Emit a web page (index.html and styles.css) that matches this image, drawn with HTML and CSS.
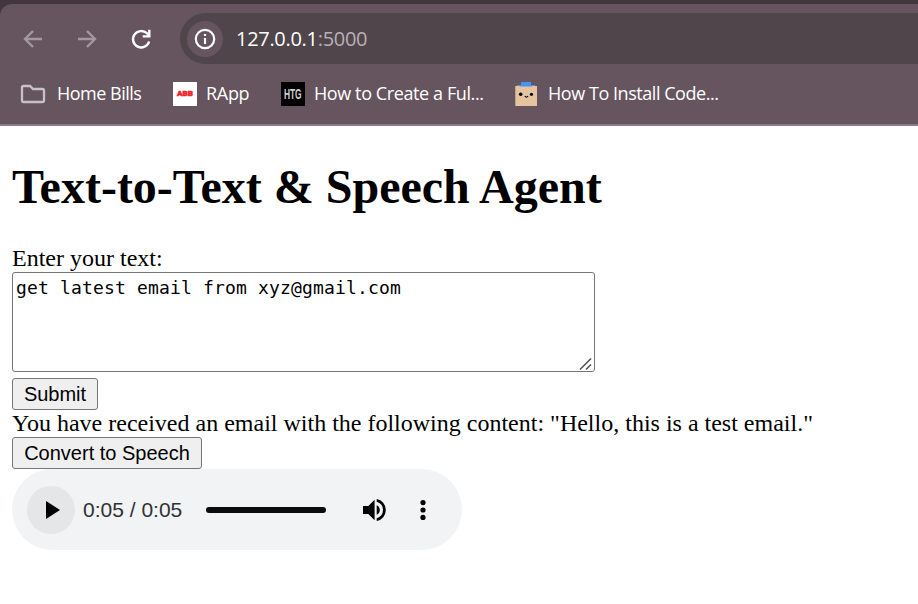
FILE: index.html
```html
<!DOCTYPE html>
<html lang="en">
<head>
<meta charset="utf-8">
<title>Text-to-Text &amp; Speech Agent</title>
<link rel="stylesheet" href="styles.css">
</head>
<body>
<header class="chrome">
  <div class="panel">
    <div class="toolbar">
      <svg class="nav dim" viewBox="0 0 24 24"><path d="M21 12H4M12 4l-8 8 8 8"/></svg>
      <svg class="nav dim" viewBox="0 0 24 24"><path d="M3 12h17M12 4l8 8-8 8"/></svg>
      <svg class="nav reload" viewBox="0 0 24 24"><path d="M20.100 14.500A8.200 8.200 0 1 1 17.800 6.200L20 8.400"/><path d="M20.300 2.800v6.600h-6.600"/></svg>
      <div class="address">
        <span class="info"><svg viewBox="0 0 22 22"><circle cx="11" cy="11" r="9.2"/><path d="M11 10v6M11 6v2.1"/></svg></span>
        <span class="url">127.0.0.1<span class="port">:5000</span></span>
      </div>
    </div>
    <nav class="bookmarks">
      <svg class="folder" viewBox="0 0 26 20"><path d="M2 3.5Q2 2 3.5 2H10l3 3h9.5Q24 5 24 6.500V16.500Q24 18 22.500 18H3.500Q2 18 2 16.500Z"/></svg>
      <span class="label home">Home Bills</span>
      <span class="icon abb">ABB</span>
      <span class="label rapp">RApp</span>
      <span class="icon htg"><span>HTG</span></span>
      <span class="label create">How to Create a Ful...</span>
      <svg class="bag" viewBox="0 0 24 24"><path fill="#4795ea" d="M6 0h10v3h4v2H2V3h4z"/><path fill="#e6c3a1" d="M.3 4H22v20H.3z"/><path fill="#4795ea" d="M3 3h16l-2 1.500H5z"/><circle cx="5.700" cy="12.300" r="1.800"/><circle cx="16.500" cy="12.300" r="1.600"/><path d="M9.800 14q1.700 2.400 3.200 0" fill="none" stroke="#000" stroke-width="1.200"/></svg>
      <span class="label install">How To Install Code...</span>
    </nav>
  </div>
</header>
<main>
  <h1>Text-to-Text &amp; Speech Agent</h1>
  <label class="prompt" for="text">Enter your text:</label>
  <div class="field">
    <textarea id="text" spellcheck="false">get latest email from xyz@gmail.com</textarea>
    <svg class="grip" viewBox="0 0 14 14"><path d="M1 12.500L12 1.500M7 12.500L12 7.500"/></svg>
  </div>
  <button class="submit">Submit</button>
  <p class="reply">You have received an email with the following content: "Hello, this is a test email."</p>
  <button class="convert">Convert to Speech</button>
  <div class="player">
    <span class="play"><svg viewBox="0 0 14 18"><path d="M0 0l14 9-14 9z"/></svg></span>
    <span class="time">0:05 / 0:05</span>
    <span class="track"></span>
    <svg class="volume" viewBox="0 0 24 24"><path d="M1 8v8h5.300l6.300 6.300V1.700L6.300 8z"/><path d="M14.700 7.200v9.600a5.300 5.300 0 0 0 0-9.600z"/><path d="M14.700 1v2.800a8.500 8.500 0 0 1 0 16.400V23a11.200 11.200 0 0 0 0-22z"/></svg>
    <svg class="more" viewBox="0 0 6 20"><circle cx="3" cy="2.600" r="2.600"/><circle cx="3" cy="10" r="2.600"/><circle cx="3" cy="17.400" r="2.600"/></svg>
  </div>
</main>
</body>
</html>
```
FILE: styles.css
```css
* { box-sizing: border-box; }
body { margin: 0; background: #fff; color: #000; font: 24px/27px "Liberation Serif", serif; overflow: hidden; }
svg { display: block; flex: none; }
.chrome { height: 126px; padding-top: 4px; background: #43363c; }
.panel { height: 122px; padding-top: 9px; background: #66555e; border-bottom: 2px solid #8a7b82; border-top-left-radius: 12px; }
.toolbar { display: flex; align-items: center; height: 51px; padding-left: 21px; }
.nav { width: 24px; height: 24px; margin-right: 30px; fill: none; stroke: #fff; stroke-width: 2.4; }
.dim { stroke: #a3989e; }
.reload { margin-right: 27px; stroke-width: 2.4; }
.address { display: flex; flex: 1; align-items: center; height: 51px; padding-left: 7px; background: #50454b; border-radius: 26px 0 0 26px; }
.info { display: flex; align-items: center; justify-content: center; width: 36px; height: 36px; border-radius: 50%; background: #66555e; }
.info svg { width: 22px; height: 22px; fill: none; stroke: #fff; stroke-width: 2.2; }
.url { margin-left: 13px; color: #fff; font: 20px/28px "Open Sans", sans-serif; letter-spacing: -0.3px; white-space: nowrap; }
.port { color: #b9b0b5; }
.bookmarks { display: flex; align-items: center; height: 60px; padding-left: 20px; color: #fff; white-space: nowrap; }
.folder { width: 26px; height: 20px; fill: none; stroke: #c8c2c5; stroke-width: 2.3; }
.label { height: 28px; font: 18px/26px "Open Sans", sans-serif; letter-spacing: -0.4px; }
.home { width: 116px; padding-left: 11px; letter-spacing: -0.5px; }
.rapp { width: 84px; padding-left: 9px; letter-spacing: -0.3px; }
.create { width: 210px; padding-left: 9px; }
.install { padding-left: 9px; letter-spacing: -0.45px; }
.icon { display: flex; align-items: center; justify-content: center; flex: none; width: 24px; height: 24px; }
.abb { margin-left: 11px; background: #fff; color: #f0222b; font: 900 8px/24px "Roboto", sans-serif; -webkit-text-stroke: .6px #f0222b; }
.htg { background: #000; color: #d0d0d0; font: bold 14px/24px "Liberation Sans", sans-serif; }
.htg span { transform: scaleX(.6); }
.bag { width: 24px; height: 24px; }
main { display: flex; flex-direction: column; align-items: flex-start; padding: 33px 12px 0; }
h1 { margin: 0 0 31px; font-size: 48px; line-height: 55px; white-space: nowrap; }
.prompt { height: 27px; }
.field { position: relative; width: 583px; height: 100px; margin-bottom: 6px; }
textarea { display: block; width: 583px; height: 100px; padding: 3px; border: 1px solid #767676; border-radius: 3px; resize: none; outline: 0; color: #000; background: #fff; font: 18px/24px "DejaVu Sans Mono", monospace; letter-spacing: .16px; }
.grip { position: absolute; right: 2px; bottom: 1px; width: 14px; height: 14px; fill: none; stroke: #555; stroke-width: 1.6; }
button { height: 32px; padding: 0; border: 1px solid #767676; border-radius: 3px; background: #efefef; color: #000; font: 20px/28px "Liberation Sans", sans-serif; white-space: nowrap; }
.submit { width: 86px; }
.convert { width: 190px; }
.reply { height: 27px; margin: 0; white-space: nowrap; }
.player { display: flex; align-items: center; width: 450px; height: 81px; padding-left: 15px; border-radius: 41px; background: #f1f3f4; }
.play { display: flex; align-items: center; justify-content: center; width: 48px; height: 48px; padding-left: 3px; border-radius: 50%; background: #e4e6e7; }
.play svg { width: 14px; height: 18px; }
.time { width: 123px; margin-left: 8px; color: #303132; font: 21px/28px "Liberation Sans", sans-serif; white-space: nowrap; }
.track { width: 120px; height: 6px; border-radius: 3px; background: #0b0b0b; }
.volume { width: 24px; height: 24px; margin-left: 36px; }
.more { width: 6px; height: 20px; margin-left: 34px; }
```
